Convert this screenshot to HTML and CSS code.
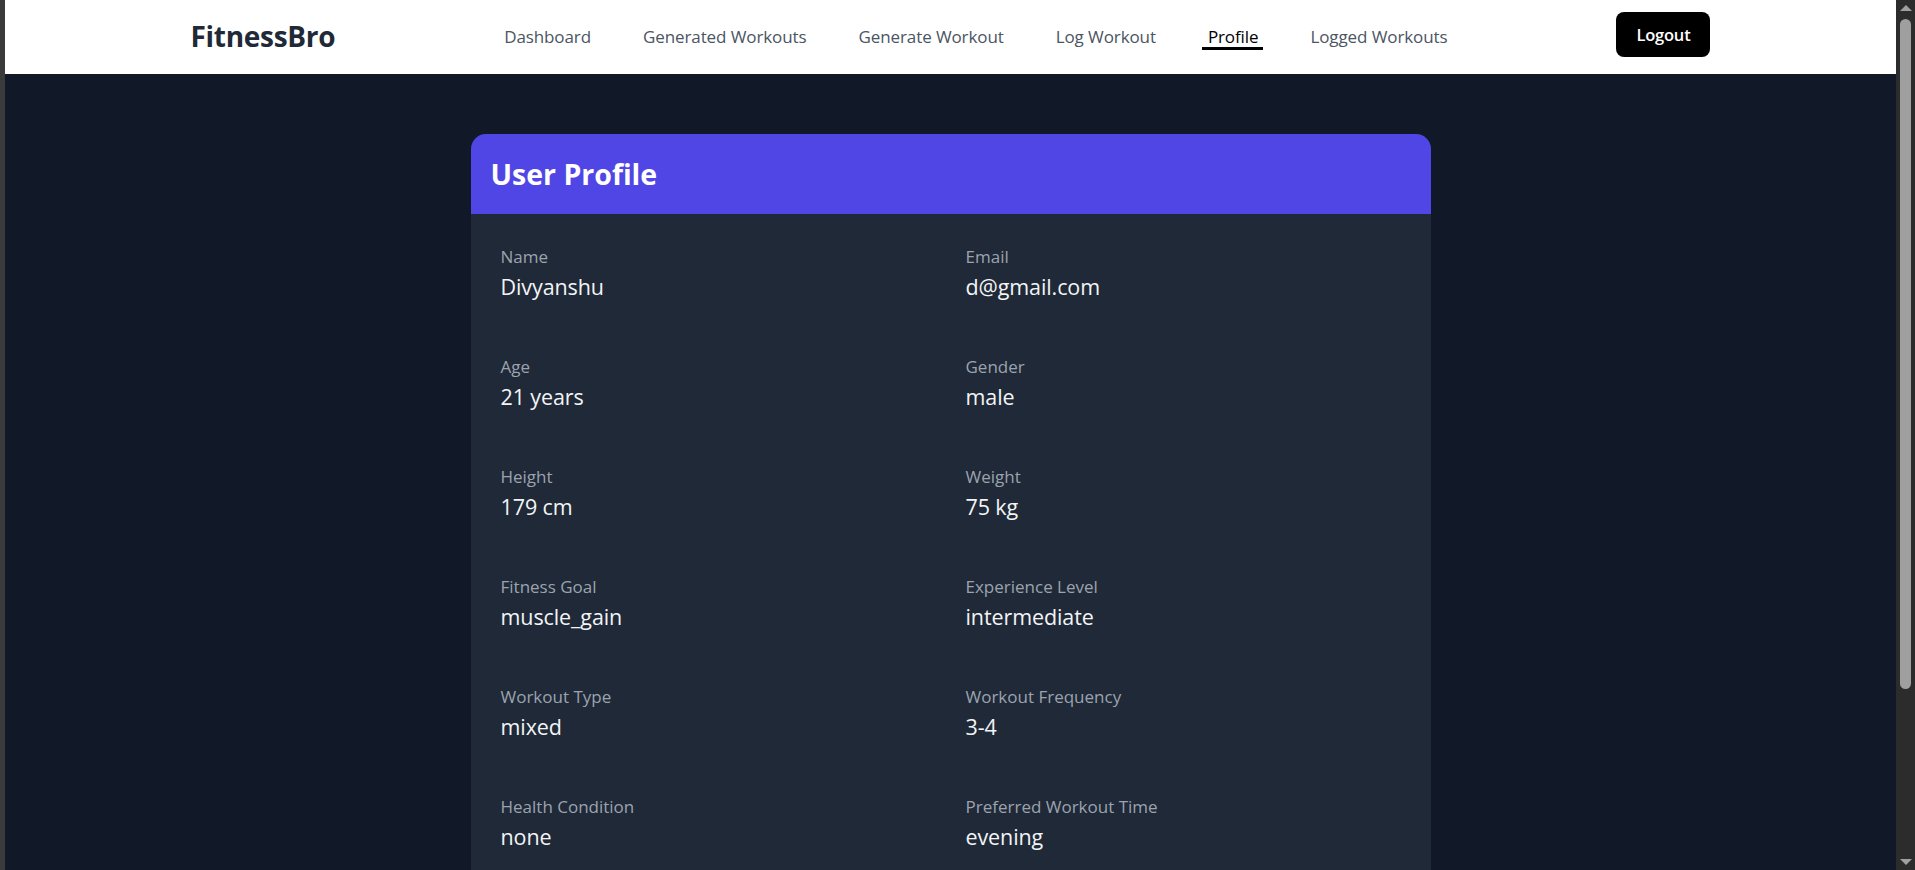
FILE: index.html
```html
<!DOCTYPE html>
<html lang="en">
<head>
<meta charset="utf-8">
<title>FitnessBro - Profile</title>
<link rel="stylesheet" href="styles.css">
</head>
<body>
<div class="frame-edge"></div>
<div class="viewport">
  <header class="topbar">
    <div class="topbar-inner">
      <div class="logo">FitnessBro</div>
      <nav class="nav">
        <a class="nav-link">Dashboard</a>
        <a class="nav-link">Generated Workouts</a>
        <a class="nav-link">Generate Workout</a>
        <a class="nav-link">Log Workout</a>
        <a class="nav-link active">Profile</a>
        <a class="nav-link">Logged Workouts</a>
      </nav>
      <button class="logout">Logout</button>
    </div>
  </header>
  <main class="content">
    <section class="card">
      <div class="card-head"><h1 class="card-title">User Profile</h1></div>
      <div class="card-body">
        <div class="field"><div class="label">Name</div><div class="value">Divyanshu</div></div>
        <div class="field"><div class="label">Email</div><div class="value">d@gmail.com</div></div>
        <div class="field"><div class="label">Age</div><div class="value">21 years</div></div>
        <div class="field"><div class="label">Gender</div><div class="value">male</div></div>
        <div class="field"><div class="label">Height</div><div class="value">179 cm</div></div>
        <div class="field"><div class="label">Weight</div><div class="value">75 kg</div></div>
        <div class="field"><div class="label">Fitness Goal</div><div class="value">muscle_gain</div></div>
        <div class="field"><div class="label">Experience Level</div><div class="value">intermediate</div></div>
        <div class="field"><div class="label">Workout Type</div><div class="value">mixed</div></div>
        <div class="field"><div class="label">Workout Frequency</div><div class="value">3-4</div></div>
        <div class="field"><div class="label">Health Condition</div><div class="value">none</div></div>
        <div class="field"><div class="label">Preferred Workout Time</div><div class="value">evening</div></div>
      </div>
    </section>
  </main>
</div>
<div class="scrollbar">
  <div class="sb-arrow up"></div>
  <div class="sb-track"><div class="sb-thumb"></div></div>
  <div class="sb-arrow down"></div>
</div>
</body>
</html>
```

FILE: styles.css
```css
* { box-sizing: border-box; }
html, body { margin: 0; padding: 0; height: 100%; }
body {
  display: flex;
  overflow: hidden;
  background: #111827;
  font-family: "Segoe UI", "Open Sans", "Noto Sans", sans-serif;
}
.frame-edge { width: 5px; flex: none; background: #3a3a3a; }
.viewport { flex: 1; min-width: 0; height: 100vh; overflow: hidden; background: #111827; }

.topbar { background: #ffffff; height: 74px; }
.topbar-inner {
  max-width: 1600px;
  margin: 0 auto;
  padding: 11px 40px 13px;
  height: 74px;
  display: flex;
  align-items: center;
  justify-content: space-between;
}
.logo { font-size: 28px; font-weight: 700; color: #1f2937; line-height: 40px; letter-spacing: -0.3px; }
.nav { display: flex; align-items: center; gap: 52px; }
.nav-link {
  position: relative;
  font-size: 17px;
  font-weight: 500;
  color: #4b5563;
  line-height: 25px;
  letter-spacing: -0.1px;
  cursor: pointer;
}
.nav-link.active { color: #000000; }
.nav-link.active::after {
  content: "";
  position: absolute;
  left: -6px;
  right: -5px;
  bottom: -1px;
  height: 2.5px;
  background: #000000;
}
.logout {
  align-self: flex-start;
  margin-top: 1px;
  height: 45px;
  padding: 0 20px;
  border: 0;
  border-radius: 8px;
  background: #000000;
  color: #ffffff;
  font-family: inherit;
  font-size: 16.5px;
  font-weight: 600;
  letter-spacing: -0.2px;
}

.content { padding-top: 60px; }
.card {
  width: 960px;
  margin: 0 auto;
  border-radius: 15px;
  overflow: hidden;
  background: #1f2937;
}
.card-head { background: #4f46e5; padding: 20px; }
.card-title { margin: 0; font-size: 28.5px; line-height: 40px; font-weight: 700; color: #ffffff; }
.card-body {
  padding: 30px;
  display: grid;
  grid-template-columns: 1fr 1fr;
  gap: 50px 30px;
}
.label { font-size: 17px; line-height: 25px; font-weight: 500; color: #9ca3af; }
.value { font-size: 21.5px; line-height: 35px; color: #f3f4f6; letter-spacing: -0.1px; }

.scrollbar {
  width: 19px;
  flex: none;
  background: #2c2c2c;
  display: flex;
  flex-direction: column;
  align-items: center;
  padding: 3px 0;
}
.sb-arrow { width: 0; height: 0; border-left: 6px solid transparent; border-right: 6px solid transparent; flex: none; }
.sb-arrow.up { border-bottom: 6px solid #a0a0a0; margin-top: 2px; }
.sb-arrow.down { border-top: 6px solid #a0a0a0; margin-bottom: 2px; }
.sb-track { flex: 1; width: 100%; display: flex; justify-content: center; padding-top: 8px; }
.sb-thumb { width: 11px; height: 670px; border-radius: 6px; background: #9f9f9f; }
```
